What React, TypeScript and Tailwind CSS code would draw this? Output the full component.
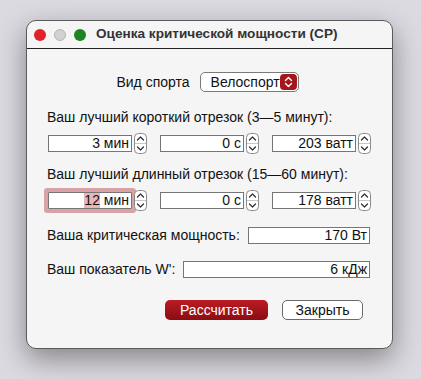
import React from 'react';

const font = { fontFamily: '"Liberation Sans", Arial, Helvetica, sans-serif' };

const Stepper = () => (
  <svg width="13" height="21" viewBox="0 0 13 21" className="ml-[2px] shrink-0">
    <rect x="0.5" y="0.5" width="12" height="20" rx="4" fill="#fff" stroke="#8a8a8a" />
    <line x1="1" y1="10.5" x2="12" y2="10.5" stroke="#c8c8c8" />
    <path d="M3.5 7 L6.5 4 L9.5 7" fill="none" stroke="#333" strokeWidth="1.3" strokeLinecap="round" strokeLinejoin="round" />
    <path d="M3.5 14 L6.5 17 L9.5 14" fill="none" stroke="#333" strokeWidth="1.3" strokeLinecap="round" strokeLinejoin="round" />
  </svg>
);

const Field = ({ value, focused }: { value: React.ReactNode; focused?: boolean }) => (
  <div className="flex items-center">
    <div
      className={`w-[84px] h-[17px] bg-white border border-[#767676] flex items-center justify-end pr-[2px] text-[14px] leading-[15px] text-[#111] ${
        focused ? 'rounded-[1px] shadow-[0_0_0_4px_#d8a2a6]' : ''
      }`}
    >
      {value}
    </div>
    <Stepper />
  </div>
);

export default function App() {
  return (
    <div className="w-[421px] h-[379px] bg-[#dcdae1] overflow-hidden pt-[20px] pl-[26px]" style={font}>
      <div className="w-[367px] h-[329px] rounded-[10px] border border-[#5a5a5a] bg-[#f5f5f5] shadow-[0_10px_28px_rgba(0,0,0,0.4)] flex flex-col overflow-hidden">
        {/* title bar */}
        <div className="h-[28px] shrink-0 border-b border-[#222] flex items-center pl-[7px]">
          <div className="flex gap-[8px]">
            <span className="w-[12px] h-[12px] rounded-full bg-[#e0232a]" />
            <span className="w-[12px] h-[12px] rounded-full bg-[#d2d2d2] border border-[#b4b4b4]" />
            <span className="w-[12px] h-[12px] rounded-full bg-[#1d841e]" />
          </div>
          <span className="ml-[10px] text-[13.6px] font-bold text-[#333]">Оценка критической мощности (CP)</span>
        </div>

        <div className="flex flex-col pl-[20px] text-[14px] leading-[17px] text-[#111]">
          {/* sport */}
          <div className="mt-[23px] flex items-center justify-center gap-[10px] pr-[24px]">
            <span>Вид спорта</span>
            <div className="w-[99px] h-[20px] bg-white border border-[#7a7a7a] rounded-[5px] flex items-center justify-between pl-[10px] pr-[1px]">
              <span>Велоспорт</span>
              <svg width="17" height="16" viewBox="0 0 17 16">
                <rect x="0" y="0" width="17" height="16" rx="4" fill="#a3161b" />
                <path d="M5.5 6.5 L8.5 3.5 L11.5 6.5" fill="none" stroke="#fff" strokeWidth="1.4" strokeLinecap="round" strokeLinejoin="round" />
                <path d="M5.5 9.5 L8.5 12.5 L11.5 9.5" fill="none" stroke="#fff" strokeWidth="1.4" strokeLinecap="round" strokeLinejoin="round" />
              </svg>
            </div>
          </div>

          <div className="mt-[17px]">Ваш лучший короткий отрезок (3—5 минут):</div>
          <div className="mt-[7px] ml-[1px] flex gap-[13px]">
            <Field value="3 мин" />
            <Field value="0 с" />
            <Field value="203 ватт" />
          </div>

          <div className="mt-[12px]">Ваш лучший длинный отрезок (15—60 минут):</div>
          <div className="mt-[7px] ml-[1px] flex gap-[13px]">
            <Field
              focused
              value={
                <>
                  <span className="bg-[#e7b6b9] h-[15px] leading-[15px]">12</span>
                  <span>&nbsp;мин</span>
                </>
              }
            />
            <Field value="0 с" />
            <Field value="178 ватт" />
          </div>

          <div className="mt-[16px] flex items-center justify-between pr-[22px]">
            <span>Ваша критическая мощность:</span>
            <div className="w-[122px] h-[17px] bg-white border border-[#767676] flex items-center justify-end pr-[2px] leading-[15px]">
              170 Вт
            </div>
          </div>

          <div className="mt-[17px] flex items-center justify-between pr-[22px]">
            <span>Ваш показатель W':</span>
            <div className="w-[187px] h-[17px] bg-white border border-[#767676] flex items-center justify-end pr-[2px] leading-[15px]">
              6 кДж
            </div>
          </div>

          <div className="mt-[22px] flex justify-end gap-[14px] pr-[29px]">
            <button className="w-[103px] h-[20px] rounded-[5px] bg-gradient-to-b from-[#bb1c24] to-[#8c0c12] text-white text-[14px] leading-[20px]">
              Рассчитать
            </button>
            <button className="w-[81px] h-[20px] rounded-[5px] bg-white border border-[#6a6a6a] text-[#111] text-[14px] leading-[18px]">
              Закрыть
            </button>
          </div>
        </div>
      </div>
    </div>
  );
}
